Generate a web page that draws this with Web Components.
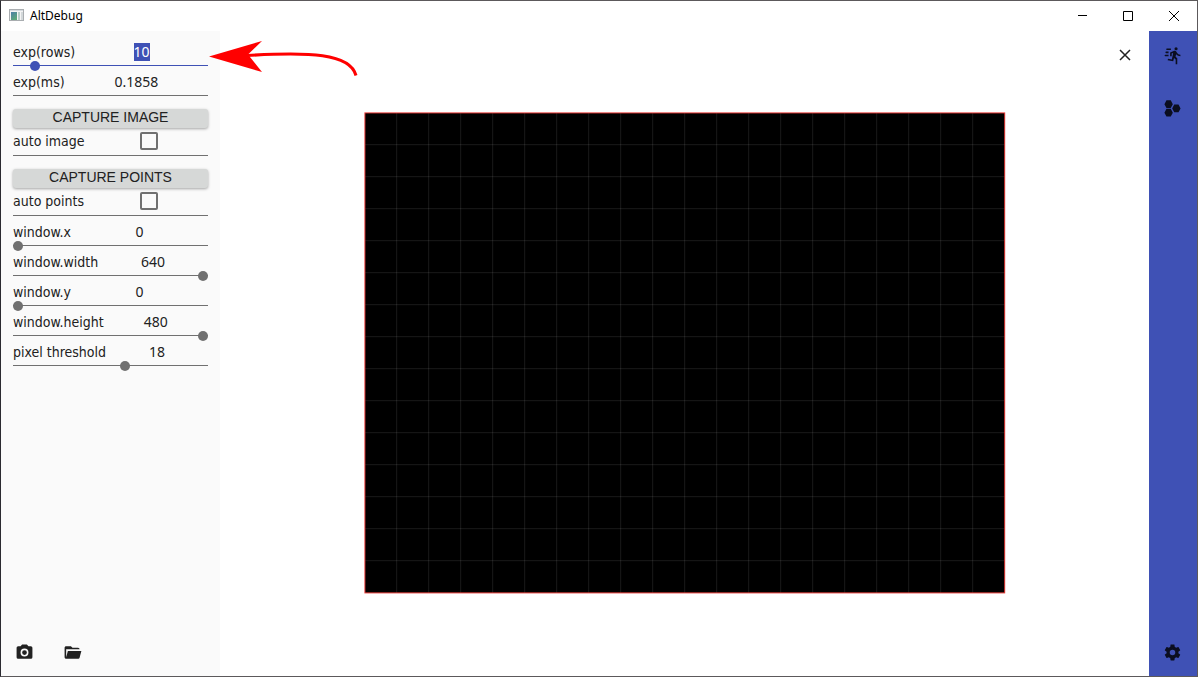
<!DOCTYPE html>
<html lang="en">
<head>
<meta charset="utf-8">
<title>AltDebug</title>
<style>
html, body { margin: 0; height: 100%; }
body { font-family: "Noto Sans", sans-serif; --label-font: 14px/18px "DejaVu Sans Condensed", "Noto Sans", sans-serif; color: #212121; overflow: hidden; }
</style>
</head>
<body>
<debug-window heading="AltDebug">
  <side-panel slot="side">
    <value-row label="exp(rows)" value="10" min="1" max="100" active></value-row>
    <value-row label="exp(ms)" value="0.1858"></value-row>
    <capture-group action="CAPTURE IMAGE" label="auto image"></capture-group>
    <capture-group action="CAPTURE POINTS" label="auto points"></capture-group>
    <value-row label="window.x" value="0" min="0" max="640"></value-row>
    <value-row label="window.width" value="640" min="0" max="640"></value-row>
    <value-row label="window.y" value="0" min="0" max="480"></value-row>
    <value-row label="window.height" value="480" min="0" max="480"></value-row>
    <value-row label="pixel threshold" value="18" min="0" max="31"></value-row>
    <icon-button slot="tools" icon="camera" label="Save image"></icon-button>
    <icon-button slot="tools" icon="folder" label="Open folder"></icon-button>
  </side-panel>
  <image-view></image-view>
  <nav-rail slot="rail">
    <icon-button icon="run" label="Run"></icon-button>
    <icon-button icon="hexagons" label="Points"></icon-button>
    <icon-button slot="end" icon="cog" label="Settings"></icon-button>
  </nav-rail>
</debug-window>

<script>
const ICONS = {
  camera: 'M4,4H7L9,2H15L17,4H20A2,2 0 0,1 22,6V18A2,2 0 0,1 20,20H4A2,2 0 0,1 2,18V6A2,2 0 0,1 4,4M12,7A5,5 0 0,0 7,12A5,5 0 0,0 12,17A5,5 0 0,0 17,12A5,5 0 0,0 12,7M12,9A3,3 0 0,1 15,12A3,3 0 0,1 12,15A3,3 0 0,1 9,12A3,3 0 0,1 12,9Z',
  folder: 'M19,20H4C2.89,20 2,19.1 2,18V6C2,4.89 2.89,4 4,4H10L12,6H19A2,2 0 0,1 21,8H4V18L6.14,10H23.21L20.93,18.5C20.7,19.37 19.92,20 19,20Z',
  run: 'M16.5,5.5A2,2 0 0,0 18.5,3.5A2,2 0 0,0 16.5,1.5A2,2 0 0,0 14.5,3.5A2,2 0 0,0 16.5,5.5M12.9,19.4L13.9,15L16,17V23H18V15.5L15.9,13.5L16.5,10.5C17.89,12.09 19.89,13 22,13V11C20.24,11.03 18.6,10.11 17.7,8.6L16.7,7C16.34,6.4 15.7,6 15,6C14.7,6 14.5,6.1 14.2,6.1L9,8.3V13H11V9.6L12.8,8.9L11.2,17L6.3,16L5.9,18L12.9,19.4M4,9A1,1 0 0,1 3,8A1,1 0 0,1 4,7H7V9H4M5,5A1,1 0 0,1 4,4A1,1 0 0,1 5,3H10V5H5M3,13A1,1 0 0,1 2,12A1,1 0 0,1 3,11H7V13H3Z',
  hexagons: 'M4.4,1.6H9.8L12.4,6.5L9.8,11.4H4.4L1.8,6.5ZM4.4,12.4H9.8L12.4,17.3L9.8,22.2H4.4L1.8,17.3ZM14.2,7H19.6L22.2,11.9L19.6,16.8H14.2L11.6,11.9Z',
  cog: 'M12,15.5A3.5,3.5 0 0,1 8.5,12A3.5,3.5 0 0,1 12,8.5A3.5,3.5 0 0,1 15.5,12A3.5,3.5 0 0,1 12,15.5M19.43,12.97C19.47,12.65 19.5,12.33 19.5,12C19.5,11.67 19.47,11.34 19.43,11L21.54,9.37C21.73,9.22 21.78,8.95 21.66,8.73L19.66,5.27C19.54,5.05 19.27,4.96 19.05,5.05L16.56,6.05C16.04,5.66 15.5,5.32 14.87,5.07L14.5,2.42C14.46,2.18 14.25,2 14,2H10C9.75,2 9.54,2.18 9.5,2.42L9.13,5.07C8.5,5.32 7.96,5.66 7.44,6.05L4.95,5.05C4.73,4.96 4.46,5.05 4.34,5.27L2.34,8.73C2.21,8.95 2.27,9.22 2.46,9.37L4.57,11C4.53,11.34 4.5,11.67 4.5,12C4.5,12.33 4.53,12.65 4.57,12.97L2.46,14.63C2.27,14.78 2.21,15.05 2.34,15.27L4.34,18.73C4.46,18.95 4.73,19.03 4.95,18.95L7.44,17.94C7.96,18.34 8.5,18.68 9.13,18.93L9.5,21.58C9.54,21.82 9.75,22 10,22H14C14.25,22 14.46,21.82 14.5,21.58L14.87,18.93C15.5,18.67 16.04,18.34 16.56,17.94L19.05,18.95C19.27,19.03 19.54,18.95 19.66,18.73L21.66,15.27C21.78,15.05 21.73,14.78 21.54,14.63L19.43,12.97Z'
};

class BaseElement extends HTMLElement {
  connectedCallback() {
    if (this.shadowRoot) return;
    this.attachShadow({ mode: 'open' }).innerHTML = this.render();
    this.ready();
  }
  ready() {}
  attr(name) { return this.getAttribute(name) || ''; }
}

customElements.define('debug-window', class extends BaseElement {
  render() {
    return `<style>
      :host { display: flex; flex-direction: column; height: 100%; box-sizing: border-box; background: #fff; border: 1px solid #5c595b; border-left-color: #2b2a30; }
      header { display: flex; align-items: center; flex: none; height: 30px; background: #fff; color: #000; }
      h1 { flex: 1; margin: 0 0 0 5px; font: 12px/18px "Noto Sans", sans-serif; }
      .logo { margin-left: 8px; display: block; }
      button { width: 46px; height: 30px; padding: 0; border: 0; background: none; display: grid; place-items: center; }
      .body { flex: 1; min-height: 0; display: flex; }
      main { flex: 1; min-width: 0; display: flex; }
    </style>
    <header>
      <svg class="logo" width="16" height="14" viewBox="0 0 16 14">
        <defs>
          <linearGradient id="g" x1="0" y1="0" x2="0.6" y2="1"><stop offset="0" stop-color="#4c7fa8"/><stop offset="1" stop-color="#5da878"/></linearGradient>
        </defs>
        <rect x="0.5" y="0.5" width="14" height="11" fill="#f4f4f4" stroke="#a9adb0"/>
        <rect x="1" y="1" width="13" height="1" fill="#d5dade"/>
        <rect x="2" y="3" width="6" height="8" fill="url(#g)"/>
        <rect x="9" y="3" width="2" height="8" fill="#b9cfc9"/>
        <rect x="12" y="3" width="2" height="8" fill="#d3d8da"/>
      </svg>
      <h1>${this.attr('heading')}</h1>
      <button aria-label="Minimize"><svg width="10" height="10"><path d="M1 4.5H11" stroke="#000"/></svg></button>
      <button aria-label="Maximize"><svg width="10" height="10"><path d="M.5 .5H9.5V9.5H.5Z" fill="none" stroke="#000"/></svg></button>
      <button aria-label="Close"><svg width="10" height="10"><path d="M0 0L10 10M10 0L0 10" stroke="#000"/></svg></button>
    </header>
    <div class="body">
      <slot name="side"></slot>
      <main><slot></slot></main>
      <slot name="rail"></slot>
    </div>`;
  }
});

customElements.define('side-panel', class extends BaseElement {
  render() {
    return `<style>
      :host { display: flex; flex-direction: column; flex: none; width: 219px; box-sizing: border-box; padding: 5px 12px 12px; background: #fafafa; }
      .rows { flex: 1; }
      footer { display: flex; gap: 25px; }
    </style>
    <div class="rows"><slot></slot></div>
    <footer><slot name="tools"></slot></footer>`;
  }
});

customElements.define('value-row', class extends BaseElement {
  render() {
    const slider = this.hasAttribute('max')
      ? `<input type="range" aria-label="${this.attr('label')} slider" min="${this.attr('min')}" max="${this.attr('max')}" value="${this.attr('value')}">` : '';
    return `<style>
      :host { --accent: #707070; display: block; position: relative; height: 30px; box-sizing: border-box; border-bottom: 1px solid var(--accent); }
      :host([active]) { --accent: #3f51b5; }
      .row { display: flex; align-items: center; height: 18px; padding-top: 7px; }
      label { font: var(--label-font); white-space: nowrap; }
      .value { flex: 1; min-width: 0; width: 0; height: 18px; padding: 0; border: 0; outline: 0; background: none; color: inherit; font: 14px/18px "Noto Sans", sans-serif; text-align: center; caret-color: transparent; }
      .value::selection { background: #3f51b5; color: #fff; }
      input[type=range] { position: absolute; left: 0; bottom: -6px; width: 100%; height: 10px; margin: 0; appearance: none; background: none; }
      input[type=range]::-webkit-slider-thumb { appearance: none; width: 10px; height: 10px; border-radius: 50%; background: var(--accent); }
    </style>
    <div class="row"><label for="v">${this.attr('label')}</label><input class="value" id="v" value="${this.attr('value')}"></div>${slider}`;
  }
  ready() {
    if (!this.hasAttribute('active')) return;
    const field = this.shadowRoot.getElementById('v');
    field.focus();
    field.select();
  }
});

customElements.define('capture-group', class extends BaseElement {
  render() {
    return `<style>
      :host { display: block; height: 60px; box-sizing: border-box; padding-top: 13px; border-bottom: 1px solid #707070; }
      button { display: block; width: 100%; height: 19px; padding: 0 0 2px; border: 0; border-radius: 3px; background: #d6d8d7; color: #212121; font: 14px/17px "Liberation Sans", sans-serif; box-shadow: 0 1px 3px rgba(0,0,0,.35); }
      .row { display: flex; align-items: center; height: 26px; }
      label { font: var(--label-font); margin-right: 5px; white-space: nowrap; }
      .box { flex: 1; display: flex; justify-content: center; }
      input { appearance: none; width: 18px; height: 18px; margin: 0; border: 2px solid #707070; border-radius: 2px; }
    </style>
    <button>${this.attr('action')}</button>
    <div class="row"><label for="c">${this.attr('label')}</label><span class="box"><input type="checkbox" id="c"></span></div>`;
  }
});

customElements.define('icon-button', class extends BaseElement {
  render() {
    return `<style>
      :host { display: block; }
      button { display: grid; place-items: center; width: 23px; height: 24px; padding: 0; border: 0; background: none; color: inherit; }
    </style>
    <button aria-label="${this.attr('label')}"><svg width="19" height="19" viewBox="0 0 24 24"><path fill="currentColor" fill-rule="evenodd" d="${ICONS[this.attr('icon')]}"/></svg></button>`;
  }
});

customElements.define('image-view', class extends BaseElement {
  render() {
    let grid = '';
    for (let x = 31.7; x < 640; x += 32) grid += `M${x} 0V480`;
    for (let y = 31.7; y < 480; y += 32) grid += `M0 ${y}H640`;
    return `<style>
      :host { display: flex; flex: 1; align-items: center; justify-content: center; position: relative; background: #fff; }
      .frame { display: block; }
      .pointer { position: absolute; left: -11px; top: 9px; pointer-events: none; }
      button { position: absolute; top: 12px; right: 12px; width: 24px; height: 24px; padding: 0; border: 0; background: none; display: grid; place-items: center; }
    </style>
    <svg class="frame" width="643" height="483" viewBox="-2 -1 643 483" role="img" aria-label="Captured image">
      <rect width="640" height="480" fill="#000"/>
      <path d="${grid}" stroke="#fff" stroke-opacity=".1"/>
      <rect x="-.1" y="-.1" width="639.8" height="480" fill="none" stroke="#e53935"/>
    </svg>
    <svg class="pointer" width="152" height="38" viewBox="0 0 152 38">
      <path d="M0 16.5L53 1L39 14.5L53 32Z" fill="red"/>
      <path d="M38 15.5C100 12 141 13 147 35.500" fill="none" stroke="red" stroke-width="3"/>
    </svg>
    <button aria-label="Close view"><svg width="12" height="12"><path d="M1 1L11 11M11 1L1 11" stroke="#212121" stroke-width="1.5"/></svg></button>`;
  }
});

customElements.define('nav-rail', class extends BaseElement {
  render() {
    return `<style>
      :host { display: flex; flex-direction: column; flex: none; justify-content: space-between; width: 48px; box-sizing: border-box; padding: 12px; background: #3f51b5; color: #0b0e20; }
      .top { display: flex; flex-direction: column; gap: 29px; }
    </style>
    <nav class="top"><slot></slot></nav>
    <slot name="end"></slot>`;
  }
});
</script>
</body>
</html>
